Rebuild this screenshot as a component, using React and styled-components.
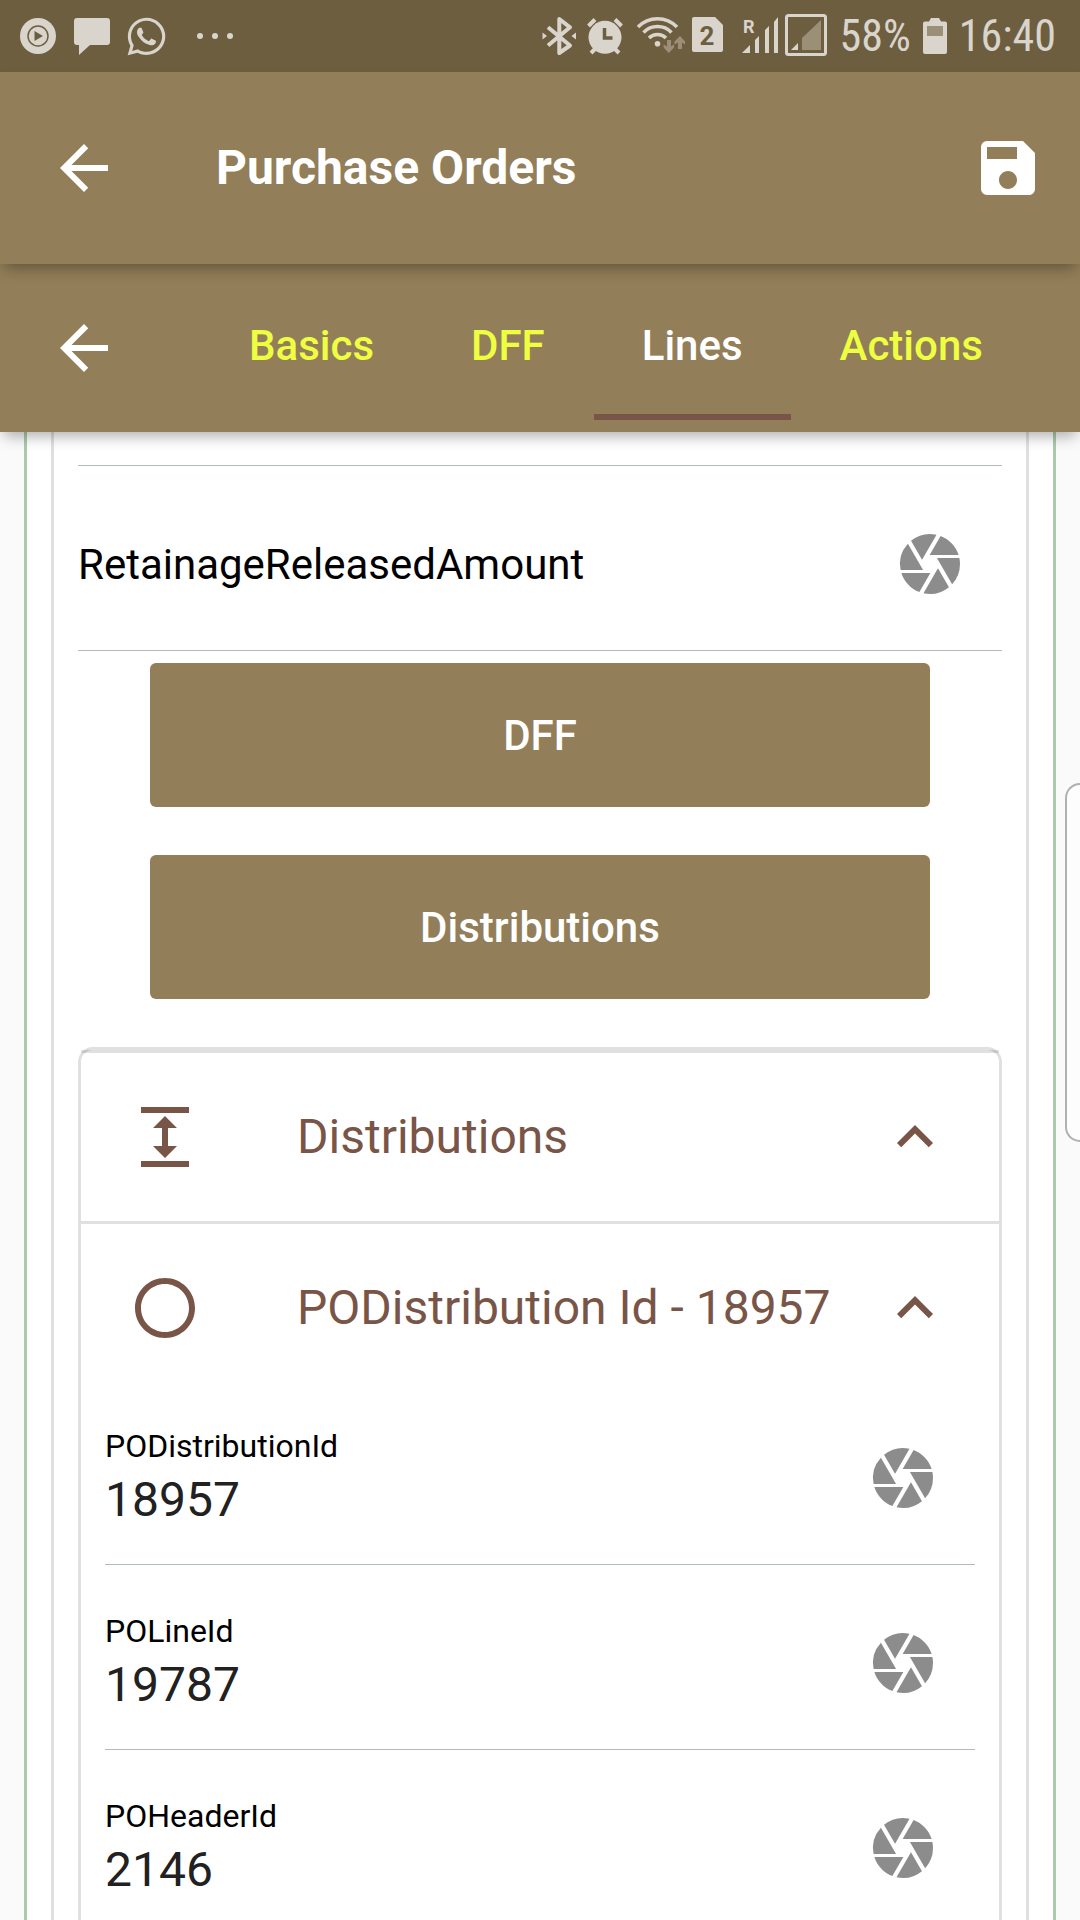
import React, { useId, useState } from "react";
import styled, { createGlobalStyle } from "styled-components";
import {
  MdArrowBack,
  MdSave,
  MdCamera,
  MdExpand,
  MdExpandLess,
  MdRadioButtonUnchecked,
} from "react-icons/md";
import { FaWhatsapp } from "react-icons/fa";

const color = {
  status: "#6d5e40",
  statusInk: "#dad5cc",
  statusDim: "#9b8f77",
  primary: "#927e58",
  accent: "#795548",
  lime: "#eeff41",
  divider: "rgba(0, 0, 0, 0.12)",
  underline: "#b0babf",
  green: "#abcaac",
};

const GlobalStyle = createGlobalStyle`
  *, *::before, *::after { box-sizing: border-box; }
  body {
    margin: 0;
    background: #fafafa;
    font-family: Roboto, "Noto Sans", sans-serif;
  }
  button, input { font: inherit; color: inherit; }
  svg { display: block; flex: none; }
`;

const Screen = styled.div`
  display: flex;
  flex-direction: column;
  height: 100vh;
  overflow: hidden;
  position: relative;
`;

/* ---------- status bar ---------- */

const StatusBar = styled.div`
  flex: none;
  display: flex;
  align-items: center;
  justify-content: space-between;
  height: 72px;
  padding: 0 24px 0 20px;
  background: ${color.status};
  color: ${color.statusInk};
`;

const StatusGroup = styled.div`
  display: flex;
  align-items: center;
  gap: ${(p) => p.$gap}px;
`;

const StatusText = styled.span`
  font-family: "Roboto Condensed", "Liberation Sans Narrow", Roboto, sans-serif;
  font-size: 44px;
  line-height: 72px;
  white-space: nowrap;
`;

const NotificationIcons = () => (
  <svg width="90" height="72" viewBox="20 0 90 72" fill={color.statusInk}>
    <circle cx="38" cy="36" r="18" />
    <circle cx="38" cy="36" r="10" fill="none" stroke={color.status} strokeWidth="1.5" />
    <path d="M34.5 31 43 36l-8.500 5z" fill={color.status} />
    <path d="M77 18h30a3 3 0 0 1 3 3v21a3 3 0 0 1-3 3H90L79 55V45h-2a3 3 0 0 1-3-3V21a3 3 0 0 1 3-3z" />
  </svg>
);

const MoreDots = () => (
  <svg width="50" height="72" viewBox="183 0 50 72" fill={color.statusInk}>
    <circle cx="200" cy="36" r="3" />
    <circle cx="215" cy="36" r="3" />
    <circle cx="230" cy="36" r="3" />
  </svg>
);

const RadioIcons = () => (
  <svg width="286" height="72" viewBox="542 0 286 72" fill={color.statusInk}>
    <path
      d="M548 27.300 570 45.500 559.300 53V19L570 27.300 548 45.500"
      fill="none"
      stroke={color.statusInk}
      strokeWidth="4"
      strokeLinejoin="round"
    />
    <path d="M542.500 32.500 547 36l-4.500 3.500zM576 32.500 571.500 36l4.500 3.500z" />

    <circle cx="605" cy="37.300" r="16.500" />
    <path
      d="M588.500 26 595 19.500M615 19.500 621.500 26M591 53l4-4M619 53l-4-4"
      stroke={color.statusInk}
      strokeWidth="4"
    />
    <path d="M604.500 28v10h8" fill="none" stroke={color.status} strokeWidth="3.500" />

    <g fill="none" stroke={color.statusInk} strokeWidth="3.500">
      <path d="M638 27a27 27 0 0 1 39 0" />
      <path d="M643.500 32.500a19.500 19.500 0 0 1 28 0" />
      <path d="M649 38a12 12 0 0 1 17 0" />
    </g>
    <circle cx="657.500" cy="43.700" r="2.800" />
    <path
      d="M667 40h4v6.500l3-2v3L668.800 53l-5.200-5.500v-3l3.400 2zM678 49h4v-6.500l3 2v-3L680 36l-5.500 5.500v3l3.500-2z"
      fill={color.statusDim}
    />

    <path d="M694 17h21l8 8v25a2 2 0 0 1-2 2h-27a2 2 0 0 1-2-2V19a2 2 0 0 1 2-2z" />
    <text
      x="707"
      y="45"
      textAnchor="middle"
      fill={color.status}
      fontFamily="Roboto, sans-serif"
      fontSize="26"
      fontWeight="700"
    >
      2
    </text>

    <text x="743" y="33" fontFamily="Roboto, sans-serif" fontSize="18" fontWeight="700">
      R
    </text>
    <path d="M742 53l8-8v8zM755 53V40l4-4v17zM765 53V30l4-4v27zM774 53V22l4-5v36z" />

    <rect
      x="786.500"
      y="15.500"
      width="39"
      height="39"
      rx="2"
      fill="none"
      stroke={color.statusInk}
      strokeWidth="3"
    />
    <path d="M791 50l7-7v7z" />
    <path d="M802 50V38l19-18v30z" fill={color.statusDim} />
  </svg>
);

const Battery = () => (
  <svg width="24" height="72" viewBox="922 0 24 72" fill={color.statusInk}>
    <path d="M930 18h8l2 3.500h4a2 2 0 0 1 2 2V52a2 2 0 0 1-2 2h-20a2 2 0 0 1-2-2V23.500a2 2 0 0 1 2-2h4z" />
    <path d="M926 26h16v10h-16z" fill={color.statusDim} />
  </svg>
);

/* ---------- bars ---------- */

const Bar = styled.header`
  flex: none;
  display: flex;
  align-items: center;
  position: relative;
  z-index: ${(p) => p.$level};
  height: ${(p) => p.$height}px;
  padding: 0 36px 0 48px;
  background: ${color.primary};
  color: #fff;
  box-shadow: 0 8px 14px -4px rgba(0, 0, 0, 0.33);
`;

const IconButton = styled.button`
  flex: none;
  width: 72px;
  height: 72px;
  padding: 0;
  border: 0;
  background: none;
  font-size: 72px;
  cursor: pointer;
`;

const Title = styled.h1`
  flex: 1;
  margin: 0 0 0 96px;
  font-size: 48px;
  line-height: 58px;
  font-weight: 700;
`;

const Tabs = styled.nav`
  display: flex;
  gap: 1px;
  align-self: flex-end;
  margin: 0 0 12px 81px;
`;

const Tab = styled.button`
  height: 144px;
  padding: 0 48px;
  border: 0;
  border-bottom: 6px solid ${(p) => (p.$active ? color.accent : "transparent")};
  background: none;
  color: ${(p) => (p.$active ? "#fff" : color.lime)};
  font-size: 42px;
  font-weight: 500;
  white-space: nowrap;
  cursor: pointer;
`;

/* ---------- content ---------- */

const Content = styled.main`
  flex: 1;
  min-height: 0;
  overflow: hidden;
  padding: 0 24px;
`;

const Frame = styled.section`
  padding: 0 24px;
  border: solid ${(p) => p.$line};
  border-width: 0 3px;
  background: #fff;
`;

const FieldList = styled.div`
  display: flex;
  flex-direction: column;
  gap: 12px;
`;

const FieldEnd = styled.div`
  height: 34px;
  border-bottom: 1px solid ${color.underline};
`;

const FieldRow = styled.div`
  display: flex;
  align-items: center;
  height: 173px;
  padding-right: 36px;
  border-bottom: 1px solid ${color.underline};
`;

const FieldText = styled.div`
  flex: 1;
  min-width: 0;
  display: flex;
  flex-direction: column;
`;

const FieldLabel = styled.label`
  color: #000;
  font-size: 32px;
  line-height: 42px;
`;

const FieldInput = styled.input`
  width: 100%;
  height: 64px;
  padding: 0;
  border: 0;
  outline: 0;
  background: none;
  color: #212121;
  font-size: ${(p) => (p.$floating ? 48 : 42)}px;

  &::placeholder {
    color: #000;
    opacity: 1;
  }
`;

const CameraButton = styled(IconButton)`
  color: #8c8c8c;
`;

const Actions = styled.div`
  display: flex;
  flex-direction: column;
  gap: 48px;
  padding: 12px 72px 48px;
`;

const ActionButton = styled.button`
  height: 144px;
  border: 0;
  border-radius: 6px;
  background: ${color.primary};
  color: #fff;
  font-size: 42px;
  font-weight: 500;
  cursor: pointer;
`;

const Card = styled.section`
  border: 3px solid ${color.divider};
  border-radius: 15px;
`;

const Panel = styled.div`
  border-top: 3px solid ${color.divider};
`;

const PanelHeader = styled.button`
  display: flex;
  align-items: center;
  width: 100%;
  height: 168px;
  padding: 0 48px;
  border: 0;
  background: none;
  color: ${color.accent};
  text-align: left;
  cursor: pointer;
`;

const PanelTitle = styled.span`
  flex: 1;
  margin-left: 96px;
  font-size: 48px;
  line-height: 56px;
  white-space: nowrap;
`;

const PanelBody = styled.div`
  padding: 0 24px 24px;
`;

const EdgeHandle = styled.div`
  position: absolute;
  top: 783px;
  right: 0;
  width: 15px;
  height: 359px;
  border: 2px solid #b0b0b0;
  border-right: 0;
  border-radius: 20px 0 0 20px;
  background: #fdfdfd;
`;

function Field({ label, value }) {
  const id = useId();
  const [text, setText] = useState(value || "");
  const floating = text !== "";
  return (
    <FieldRow>
      <FieldText>
        {floating && <FieldLabel htmlFor={id}>{label}</FieldLabel>}
        <FieldInput
          id={id}
          $floating={floating}
          aria-label={label}
          placeholder={label}
          value={text}
          onChange={(e) => setText(e.target.value)}
        />
      </FieldText>
      <CameraButton type="button" aria-label={"Scan " + label}>
        <MdCamera />
      </CameraButton>
    </FieldRow>
  );
}

function PanelToggle({ icon: Icon, title, open, onToggle }) {
  return (
    <PanelHeader type="button" aria-expanded={open} onClick={onToggle}>
      <Icon size={72} />
      <PanelTitle>{title}</PanelTitle>
      <MdExpandLess size={72} />
    </PanelHeader>
  );
}

const tabs = ["Basics", "DFF", "Lines", "Actions"];

const distributionFields = [
  { label: "PODistributionId", value: "18957" },
  { label: "POLineId", value: "19787" },
  { label: "POHeaderId", value: "2146" },
];

export default function App() {
  const [activeTab, setActiveTab] = useState("Lines");
  const [listOpen, setListOpen] = useState(true);
  const [itemOpen, setItemOpen] = useState(true);

  return (
    <Screen>
      <GlobalStyle />
      <StatusBar>
        <StatusGroup $gap={15}>
          <NotificationIcons />
          <FaWhatsapp size={43} />
          <MoreDots />
        </StatusGroup>
        <StatusGroup $gap={12}>
          <RadioIcons />
          <StatusText>58%</StatusText>
          <Battery />
          <StatusText>16:40</StatusText>
        </StatusGroup>
      </StatusBar>

      <Bar $height={192} $level={3}>
        <IconButton type="button" aria-label="Back">
          <MdArrowBack />
        </IconButton>
        <Title>Purchase Orders</Title>
        <IconButton type="button" aria-label="Save">
          <MdSave />
        </IconButton>
      </Bar>

      <Bar as="div" $height={168} $level={2}>
        <IconButton type="button" aria-label="Previous section">
          <MdArrowBack />
        </IconButton>
        <Tabs>
          {tabs.map((name) => (
            <Tab
              key={name}
              type="button"
              $active={name === activeTab}
              onClick={() => setActiveTab(name)}
            >
              {name}
            </Tab>
          ))}
        </Tabs>
      </Bar>

      <Content>
        <Frame $line={color.green}>
          <Frame $line="#e0e0e0">
            <FieldList>
              <FieldEnd />
              <Field label="RetainageReleasedAmount" />
            </FieldList>
            <Actions>
              <ActionButton type="button">DFF</ActionButton>
              <ActionButton type="button">Distributions</ActionButton>
            </Actions>
            <Card>
              <Panel>
                <PanelToggle
                  icon={MdExpand}
                  title="Distributions"
                  open={listOpen}
                  onToggle={() => setListOpen(!listOpen)}
                />
              </Panel>
              {listOpen && (
                <Panel>
                  <PanelToggle
                    icon={MdRadioButtonUnchecked}
                    title="PODistribution Id - 18957"
                    open={itemOpen}
                    onToggle={() => setItemOpen(!itemOpen)}
                  />
                  {itemOpen && (
                    <PanelBody>
                      <FieldList>
                        {distributionFields.map((f) => (
                          <Field key={f.label} label={f.label} value={f.value} />
                        ))}
                      </FieldList>
                    </PanelBody>
                  )}
                </Panel>
              )}
            </Card>
          </Frame>
        </Frame>
      </Content>
      <EdgeHandle />
    </Screen>
  );
}
